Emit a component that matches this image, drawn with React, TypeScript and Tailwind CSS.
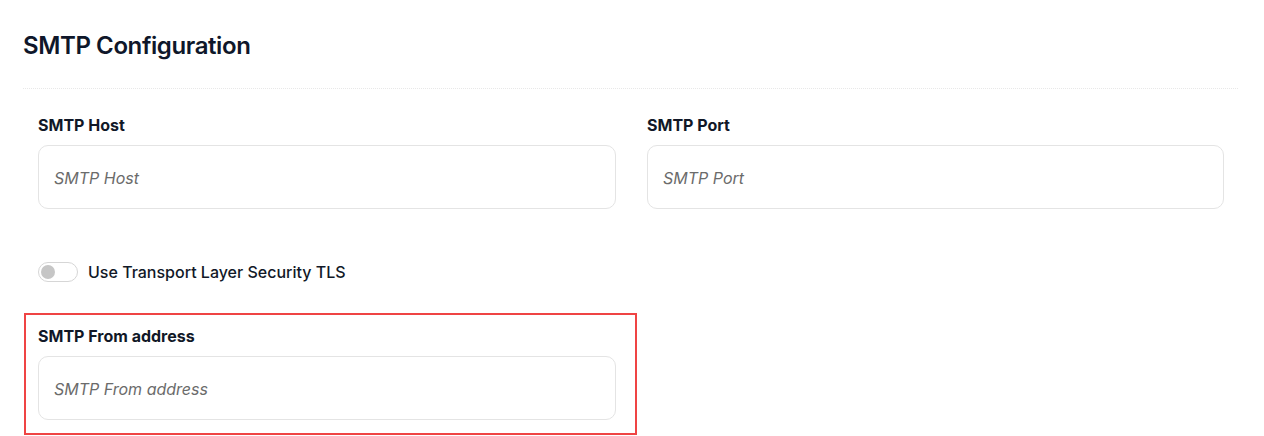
import { useState } from "react";

function Field({ label }: { label: string }) {
  return (
    <div>
      <label className="mb-2 block text-base leading-6 font-bold text-[#111827]">{label}</label>
      <input
        type="text"
        placeholder={label}
        className="h-16 w-full rounded-[10px] border border-[#e4e4e4] bg-white px-[15px] pt-[2px] text-base text-[#111827] outline-none placeholder:italic placeholder:text-[#6b6b6b]"
      />
    </div>
  );
}

export default function App() {
  const [tls, setTls] = useState(false);

  return (
    <div className="min-h-screen bg-white px-[23px] pt-[30px] font-['Inter',sans-serif]">
      <h1 className="text-2xl leading-8 font-semibold tracking-[-0.4px] text-[#0f172a]">SMTP Configuration</h1>
      <div className="mt-[26px] mr-[3px] border-t border-dotted border-[#e8e8e8]" />

      <div className="px-[15px] pt-6">
        <div className="grid grid-cols-[578px_577px] gap-x-[31px]">
          <Field label="SMTP Host" />
          <Field label="SMTP Port" />
        </div>

        <label className="mt-[51px] flex h-6 cursor-pointer items-center gap-[10px]">
          <button
            type="button"
            onClick={() => setTls(!tls)}
            className={`relative h-5 w-10 rounded-full border ${tls ? "border-[#2563eb] bg-[#2563eb]" : "border-[#d6d6d6] bg-white"}`}
          >
            <span
              className={`absolute top-[2px] h-[14px] w-[14px] rounded-full ${tls ? "left-[22px] bg-white" : "left-[2px] bg-[#c6c6c6]"}`}
            />
          </button>
          <span className="text-base font-medium text-[#111827]">Use Transport Layer Security TLS</span>
        </label>

        <div className="mt-[29px] -ml-[14px] w-[613px] border-2 border-[#ef4444] pt-[9px] pr-[19px] pb-[13px] pl-3">
          <Field label="SMTP From address" />
        </div>
      </div>
    </div>
  );
}
